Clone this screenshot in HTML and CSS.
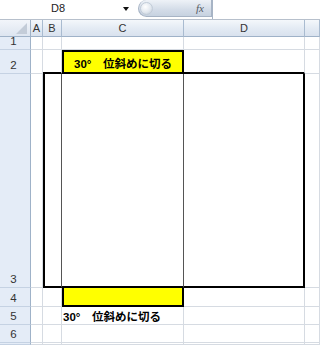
FILE: index.html
```html
<!DOCTYPE html>
<html>
<head>
<meta charset="utf-8">
<link rel="stylesheet" href="styles.css">
</head>
<body>
<div class="topbar">
  <div class="namebox">D8</div>
  <div class="dropdown"><span class="arrow"></span></div>
  <div class="pill"><span class="knob"></span><span class="fx">fx</span></div>
  <div class="formula"></div>
</div>
<div class="sheet">
  <div class="corner"><span class="tri"></span></div>
  <div class="ch">A</div>
  <div class="ch">B</div>
  <div class="ch">C</div>
  <div class="ch">D</div>
  <div class="ch"></div>

  <div class="rh">1</div>
  <div class="cell"></div><div class="cell"></div><div class="cell"></div><div class="cell"></div><div class="cell"></div>

  <div class="rh">2</div>
  <div class="cell"></div>
  <div class="cell b2"></div>
  <div class="cell yellow c2"><span class="label">30°　位斜めに切る</span></div>
  <div class="cell d2"></div>
  <div class="cell"></div>

  <div class="rh">3</div>
  <div class="cell"></div>
  <div class="cell b3"></div>
  <div class="cell c3"></div>
  <div class="cell d3"></div>
  <div class="cell"></div>

  <div class="rh">4</div>
  <div class="cell"></div>
  <div class="cell"></div>
  <div class="cell yellow c4"></div>
  <div class="cell"></div>
  <div class="cell"></div>

  <div class="rh">5</div>
  <div class="cell"></div>
  <div class="cell"></div>
  <div class="cell c5"><span class="label">30°　位斜めに切る</span></div>
  <div class="cell"></div>
  <div class="cell"></div>

  <div class="rh">6</div>
  <div class="cell"></div><div class="cell"></div><div class="cell"></div><div class="cell"></div><div class="cell"></div>

  <div class="rh"></div>
  <div class="cell"></div><div class="cell"></div><div class="cell"></div><div class="cell"></div><div class="cell"></div>
</div>
</body>
</html>
```

FILE: styles.css
```css
html, body {
  margin: 0;
  padding: 0;
  width: 320px;
  height: 345px;
  overflow: hidden;
  background: #ffffff;
  font-family: "Liberation Sans", "Noto Sans CJK JP", sans-serif;
}

.topbar {
  display: flex;
  height: 19px;
  border-bottom: 1px solid #b7c0cc;
  background: #ffffff;
}

.namebox {
  width: 116px;
  font-size: 11px;
  color: #222;
  line-height: 17px;
  text-align: center;
  box-sizing: border-box;
}

.dropdown {
  width: 20px;
  display: flex;
  align-items: center;
  justify-content: center;
  padding-bottom: 2px;
}

.arrow {
  width: 0;
  height: 0;
  border-left: 3px solid transparent;
  border-right: 3px solid transparent;
  border-top: 4px solid #111;
}

.pill {
  margin-left: 2px;
  width: 74px;
  height: 17px;
  box-sizing: border-box;
  border: 1px solid #a7b4c5;
  border-top: none;
  border-radius: 0 0 0 9px;
  border-top-left-radius: 9px;
  background: linear-gradient(#eef2f7, #d3dce8 60%, #c7d2e0);
  display: flex;
  align-items: center;
}

.knob {
  width: 13px;
  height: 13px;
  margin-left: 1px;
  border-radius: 50%;
  background: radial-gradient(circle at 40% 35%, #ffffff, #e2e8ef 55%, #b9c4d2);
  border: 1px solid #c2ccd8;
  box-sizing: border-box;
}

.fx {
  margin-left: auto;
  margin-right: 7px;
  font-family: "Liberation Serif", serif;
  font-style: italic;
  font-size: 11px;
  color: #555a63;
}

.formula {
  flex: 1;
  border-left: 1px solid #a7b4c5;
  background: #fff;
}

.sheet {
  display: grid;
  grid-template-columns: 31px 12px 19px 122px 121px 1fr;
  grid-template-rows: 17px 13px 24px 214px 19px 18px 18px 1fr;
  height: 325px;
}

.sheet > div {
  box-sizing: border-box;
  min-width: 0;
}

.corner {
  background: linear-gradient(#f2f5fa, #dde5f0);
  border-right: 1px solid #9fb2c8;
  border-bottom: 1px solid #9fb2c8;
  position: relative;
}

.tri {
  position: absolute;
  right: 3px;
  bottom: 2px;
  width: 0;
  height: 0;
  border-left: 11px solid transparent;
  border-bottom: 11px solid #c3ccd8;
}

.ch {
  background: linear-gradient(#f4f7fb, #e4ebf4 50%, #d9e2ee);
  border-right: 1px solid #a9bbd0;
  border-bottom: 1px solid #9fb2c8;
  font-size: 11px;
  color: #333;
  text-align: center;
  line-height: 17px;
}

.rh {
  background: #e4ecf7;
  border-right: 1px solid #9fb2c8;
  border-bottom: 1px solid #c5d2e3;
  font-size: 11.5px;
  color: #333;
  display: flex;
  align-items: flex-end;
  justify-content: center;
  padding-right: 3px;
  line-height: 13px;
  padding-bottom: 1px;
}

.cell {
  border-right: 1px solid #d6dbe2;
  border-bottom: 1px solid #d6dbe2;
}

.yellow {
  background: #ffff00;
}

.label {
  font-size: 11.5px;
  font-weight: bold;
  color: #000;
  white-space: nowrap;
}

.b2, .d2 {
  border-bottom: 2px solid #000;
}

.c2 {
  border: 2px solid #000;
  display: flex;
  align-items: center;
  justify-content: center;
  padding-top: 1px;
}

.b3 {
  border-left: 2px solid #000;
  border-bottom: 2px solid #000;
  border-right: 1px solid #555;
}

.c3 {
  border-right: 1px solid #555;
  border-bottom: 2px solid #000;
}

.d3 {
  border-right: 2px solid #000;
  border-bottom: 2px solid #000;
}

.c4 {
  border-left: 2px solid #000;
  border-right: 2px solid #000;
  border-bottom: 2px solid #000;
}

.c5 {
  display: flex;
  align-items: center;
  padding-left: 1px;
}
```
